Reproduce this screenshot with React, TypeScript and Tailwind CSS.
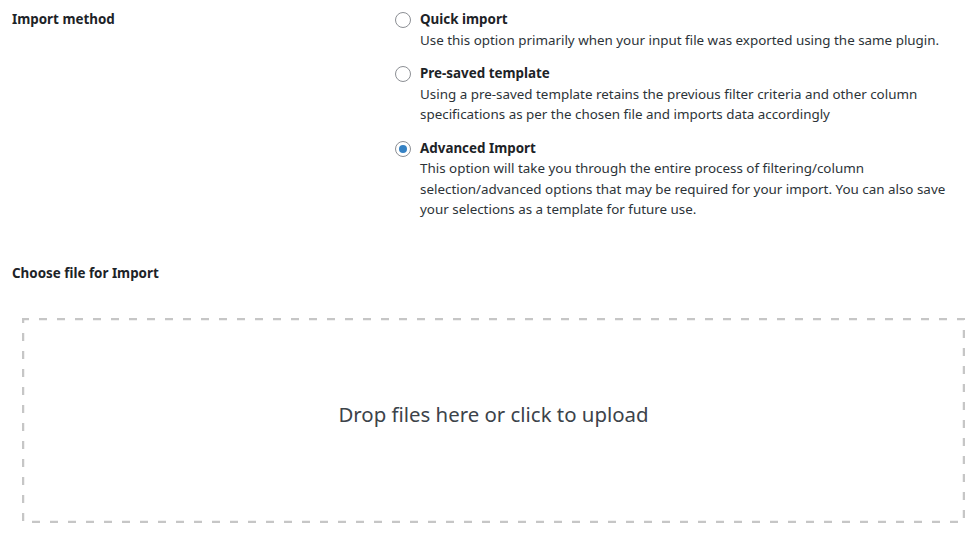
import React from "react";

const font = { fontFamily: '"Noto Sans", "Open Sans", sans-serif' };

function Radio({ checked }: { checked?: boolean }) {
  return (
    <span className="mt-[3px] flex h-4 w-4 shrink-0 items-center justify-center rounded-full border border-[#8c8f94] bg-white">
      {checked && <span className="h-2 w-2 rounded-full bg-[#3582c4]" />}
    </span>
  );
}

function Option({
  title,
  lines,
  checked,
}: {
  title: string;
  lines: string[];
  checked?: boolean;
}) {
  return (
    <div className="flex gap-[9px]">
      <Radio checked={checked} />
      <div>
        <div className="text-[13.4px] font-bold leading-[20.5px] text-[#1d2327]">{title}</div>
        {lines.map((l, i) => (
          <div key={i} className="whitespace-nowrap text-[13.4px] leading-[20.5px] text-[#2c3338]">
            {l}
          </div>
        ))}
      </div>
    </div>
  );
}

export default function App() {
  return (
    <div className="h-[533px] w-[978px] overflow-hidden bg-white" style={font}>
      <div className="flex pt-[9px]">
        <div className="w-[395px] shrink-0 pl-[12px] text-[13.4px] font-bold leading-[20.5px] text-[#1d2327]">
          Import method
        </div>
        <div className="flex flex-col gap-[13px]">
          <Option
            title="Quick import"
            lines={["Use this option primarily when your input file was exported using the same plugin."]}
          />
          <Option
            title="Pre-saved template"
            lines={[
              "Using a pre-saved template retains the previous filter criteria and other column",
              "specifications as per the chosen file and imports data accordingly",
            ]}
          />
          <Option
            checked
            title="Advanced Import"
            lines={[
              "This option will take you through the entire process of filtering/column",
              "selection/advanced options that may be required for your import. You can also save",
              "your selections as a template for future use.",
            ]}
          />
        </div>
      </div>
      <div className="mt-[43px] pl-[12px] text-[13.4px] font-bold leading-[20.5px] text-[#1d2327]">
        Choose file for Import
      </div>
      <div className="relative ml-[22px] mr-[13px] mt-[35px] flex h-[205px] items-center justify-center pb-[12px]">
        <svg className="pointer-events-none absolute inset-0 h-full w-full">
          <rect
            x="1"
            y="1"
            width="941"
            height="203"
            fill="none"
            stroke="#c6c6c6"
            strokeWidth="2.5"
            strokeDasharray="8 10"
            strokeDashoffset="2"
          />
        </svg>
        <span className="relative text-[20.4px] text-[#3c434a]">Drop files here or click to upload</span>
      </div>
    </div>
  );
}
